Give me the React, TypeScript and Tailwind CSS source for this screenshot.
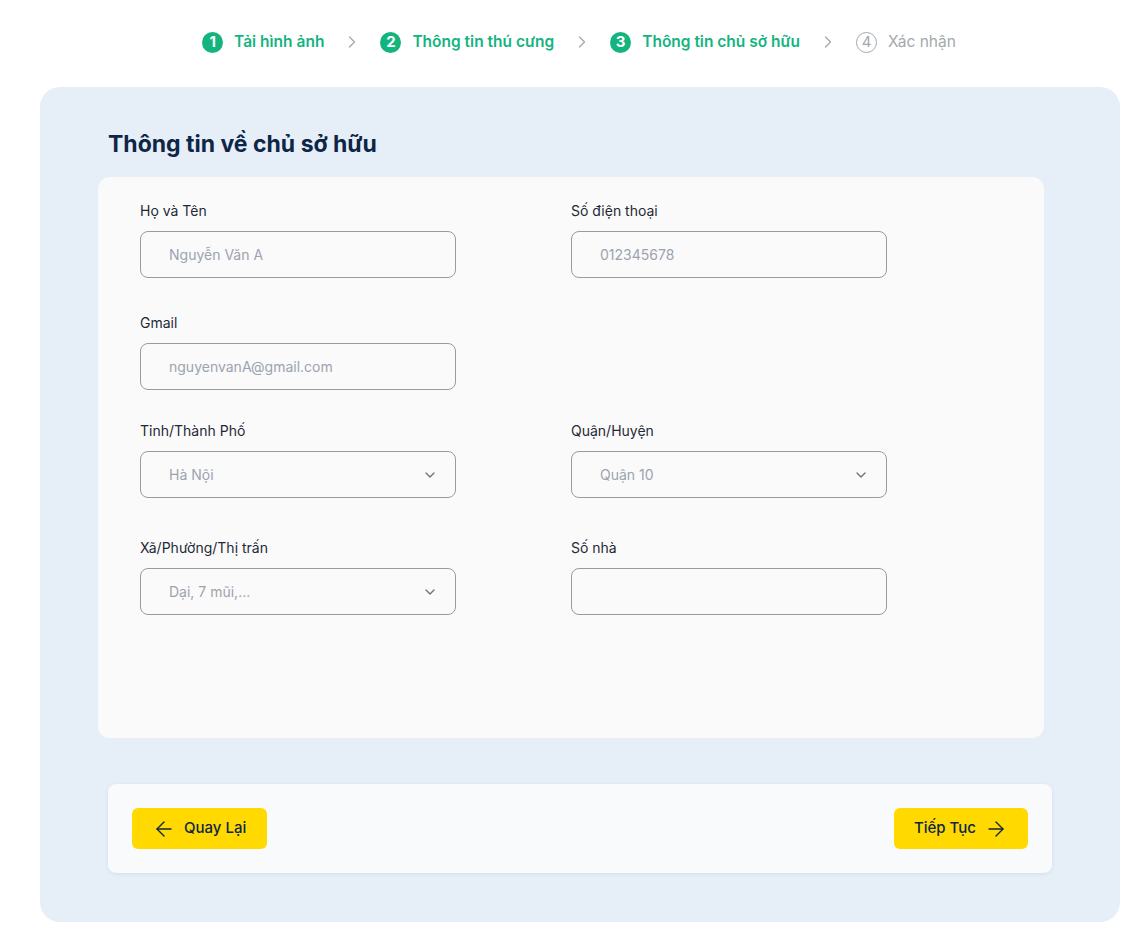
import { ArrowLeft, ArrowRight, ChevronDown, ChevronRight } from 'lucide-react';

const steps = [
  { n: 1, label: 'Tải hình ảnh', done: true },
  { n: 2, label: 'Thông tin thú cưng', done: true },
  { n: 3, label: 'Thông tin chủ sở hữu', done: true },
  { n: 4, label: 'Xác nhận', done: false },
];

function Field({ label, placeholder, select }: { label: string; placeholder?: string; select?: boolean }) {
  return (
    <div>
      <label className="block text-sm leading-5 text-[#1f2937]">{label}</label>
      <div className="mt-[10px] h-[47px] rounded-lg border border-[#959da2] flex items-center justify-between pl-[28px] pr-[17px]">
        <span className="text-sm text-[#9ca3af]">{placeholder}</span>
        {select && <ChevronDown className="w-4 h-4 text-[#6b7280]" strokeWidth={2} />}
      </div>
    </div>
  );
}

export default function App() {
  return (
    <div className="min-h-screen bg-white font-['Inter',sans-serif] pt-[29px] pb-[26px]">
      {/* Stepper */}
      <div className="flex items-center justify-center pl-[14px] h-[26px]">
        {steps.map((s, i) => (
          <div key={s.n} className="flex items-center">
            {s.done ? (
              <span className="w-[21px] h-[21px] rounded-full bg-[#14b47f] text-white text-[15px] font-bold flex items-center justify-center">{s.n}</span>
            ) : (
              <span className="w-[21px] h-[21px] rounded-full border border-[#a3a8ad] text-[#a3a8ad] text-[15px] flex items-center justify-center">{s.n}</span>
            )}
            <span className={`ml-[11px] text-[15.5px] ${s.done ? 'font-semibold text-[#14b47f]' : 'text-[#a3a8ad]'}`}>{s.label}</span>
            {i < steps.length - 1 && <ChevronRight className="mx-[18px] w-5 h-5 text-[#a3a8ad]" strokeWidth={1.5} />}
          </div>
        ))}
      </div>

      {/* Card */}
      <div className="mt-[32px] ml-10 mr-6 h-[835px] rounded-[20px] bg-[#e6eef8] pt-[41px]">
        <h1 className="ml-[68px] text-[23px] leading-8 font-bold text-[#0d2646]">Thông tin về chủ sở hữu</h1>

        <div className="mt-[17px] ml-[58px] w-[946px] h-[561px] rounded-xl bg-[#fafafa] pt-6 pl-[42px]">
          <div className="grid grid-cols-[316px_316px] gap-x-[115px]">
            <Field label="Họ và Tên" placeholder="Nguyễn Văn A" />
            <Field label="Số điện thoại" placeholder="012345678" />
          </div>
          <div className="grid grid-cols-[316px_316px] gap-x-[115px] mt-[35px]">
            <Field label="Gmail" placeholder="nguyenvanA@gmail.com" />
          </div>
          <div className="grid grid-cols-[316px_316px] gap-x-[115px] mt-[31px]">
            <Field label="Tỉnh/Thành Phố" placeholder="Hà Nội" select />
            <Field label="Quận/Huyện" placeholder="Quận 10" select />
          </div>
          <div className="grid grid-cols-[316px_316px] gap-x-[115px] mt-[40px]">
            <Field label="Xã/Phường/Thị trấn" placeholder="Dại, 7 mũi,..." select />
            <Field label="Số nhà" />
          </div>
        </div>

        <div className="mt-[46px] ml-[68px] w-[944px] h-[89px] rounded-lg bg-[#f8fafc] shadow-[0_1px_4px_rgba(15,40,80,0.08)] flex items-center justify-between px-6">
          <button className="h-[41px] rounded-md bg-[#ffd900] pl-[20px] pr-[21px] flex items-center gap-[8px] text-[15px] font-medium text-[#0d2646]">
            <ArrowLeft className="w-6 h-6" strokeWidth={1.4} />
            Quay Lại
          </button>
          <button className="h-[41px] rounded-md bg-[#ffd900] pl-5 pr-[20px] flex items-center gap-[8px] text-[15px] font-medium text-[#0d2646]">
            Tiếp Tục
            <ArrowRight className="w-6 h-6" strokeWidth={1.4} />
          </button>
        </div>
      </div>
    </div>
  );
}
